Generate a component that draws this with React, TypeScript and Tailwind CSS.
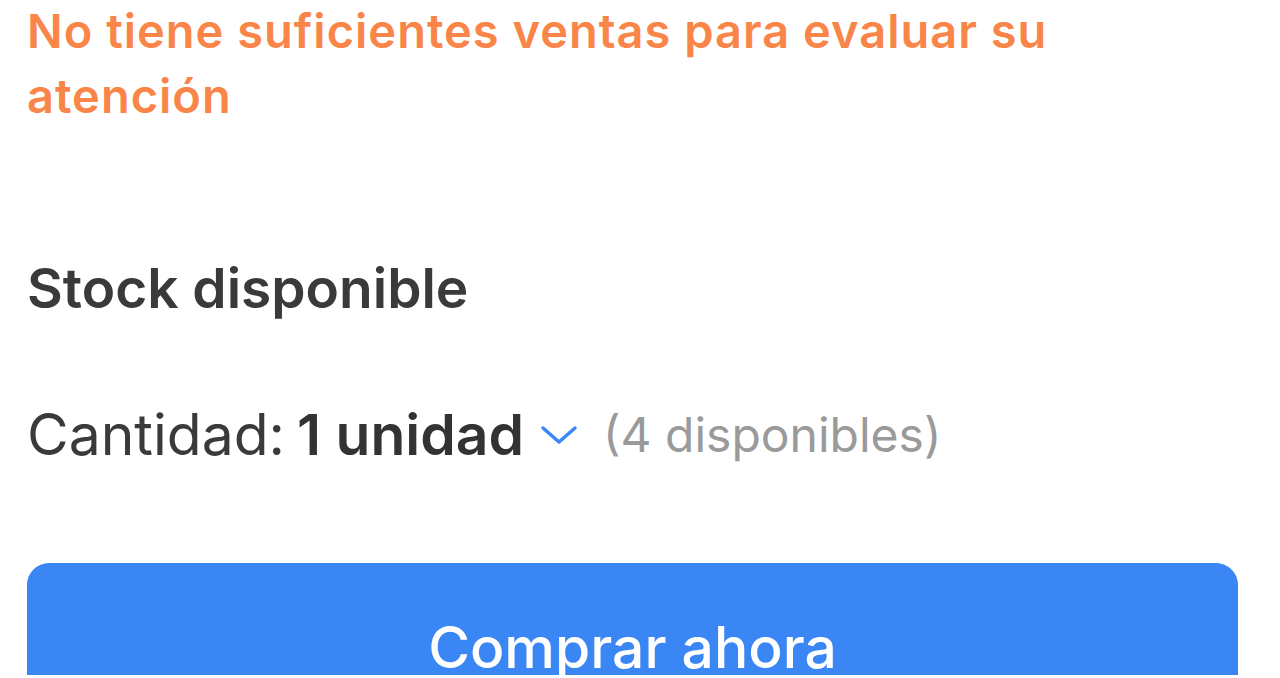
import { ReactNode } from 'react';

function Chevron() {
  return (
    <svg width="38" height="22" viewBox="0 0 38 22" fill="none" className="shrink-0">
      <polyline points="3,4 19,18 35,4" stroke="#3b86f5" strokeWidth="3.5" strokeLinecap="round" strokeLinejoin="round" />
    </svg>
  );
}

function Section({ children, className = '' }: { children: ReactNode; className?: string }) {
  return <div className={`pl-[27px] pr-[42px] ${className}`}>{children}</div>;
}

export default function App() {
  return (
    <div className="h-[675px] w-[1280px] overflow-hidden bg-white font-['Inter',sans-serif]">
      <Section className="-mt-[2px]">
        <p className="text-[47px] leading-[65px] font-semibold tracking-[1px] text-[#f98549]">
          No tiene suficientes ventas para evaluar su atención
        </p>
      </Section>

      <Section className="mt-[128px]">
        <h2 className="text-[55px] leading-[64px] font-semibold text-[#3a3a3a]">Stock disponible</h2>
      </Section>

      <Section className="mt-[83px]">
        <div className="flex items-center">
          <span className="text-[57px] leading-[64px] text-[#3a3a3a]">Cantidad:</span>
          <span className="ml-[12px] text-[57px] leading-[64px] font-semibold text-[#333]">1 unidad</span>
          <span className="ml-[16px]"><Chevron /></span>
          <span className="ml-[25px] text-[48px] leading-[64px] text-[#9a9a9a]">(4 disponibles)</span>
        </div>
      </Section>

      <Section className="mt-[96px]">
        <button className="flex h-[160px] w-full items-start justify-center rounded-[22px] bg-[#3b86f5] pt-[53px] text-[57px] leading-[64px] font-medium text-white">
          Comprar ahora
        </button>
      </Section>
    </div>
  );
}
